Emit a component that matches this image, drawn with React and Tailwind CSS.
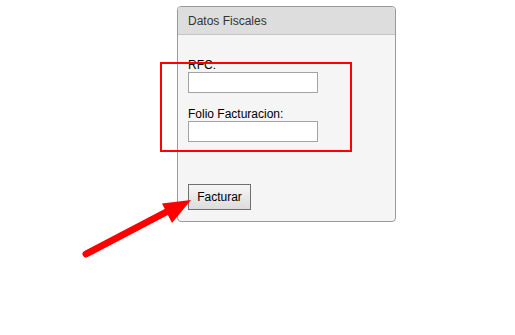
export default function App() {
  return (
    <div className="relative w-[515px] h-[335px] bg-white overflow-hidden" style={{ fontFamily: '"Liberation Sans", Arial, sans-serif' }}>
      <div className="ml-[177px] pt-[6px]">
        <div className="w-[219px] h-[216px] border border-[#9a9a9a] rounded-[4px] bg-[#f5f5f5] overflow-hidden flex flex-col">
          <div className="h-[28px] bg-[#dddddd] border-b border-[#c4c4c4] pl-[10px] flex items-center text-[12px] text-[#333] pt-[1px]">
            Datos Fiscales
          </div>
          <div className="pl-[10px] pt-[23px] flex flex-col items-start">
            <label className="text-[12px] leading-[14px] text-black">RFC:</label>
            <input className="w-[130px] h-[21px] border border-[#a3a3a3] bg-white outline-none" />
            <label className="mt-[14px] text-[12px] leading-[14px] text-black">Folio Facturacion:</label>
            <input className="w-[130px] h-[21px] border border-[#a3a3a3] bg-white outline-none" />
            <button className="mt-[42px] h-[26px] w-[63px] border border-[#707070] bg-gradient-to-b from-[#f6f6f6] to-[#dcdcdc] text-[12px] text-black">
              Facturar
            </button>
          </div>
        </div>
      </div>
      <div className="absolute left-[160px] top-[62px] w-[192px] h-[90px] border-2 border-[#ff0000]" />
      <svg className="absolute left-0 top-0" width="515" height="335">
        <line x1="86" y1="254" x2="172" y2="209" stroke="#ff0000" strokeWidth="7" strokeLinecap="round" />
        <polygon points="191,200 162,203.5 172,223" fill="#ff0000" />
      </svg>
    </div>
  );
}
